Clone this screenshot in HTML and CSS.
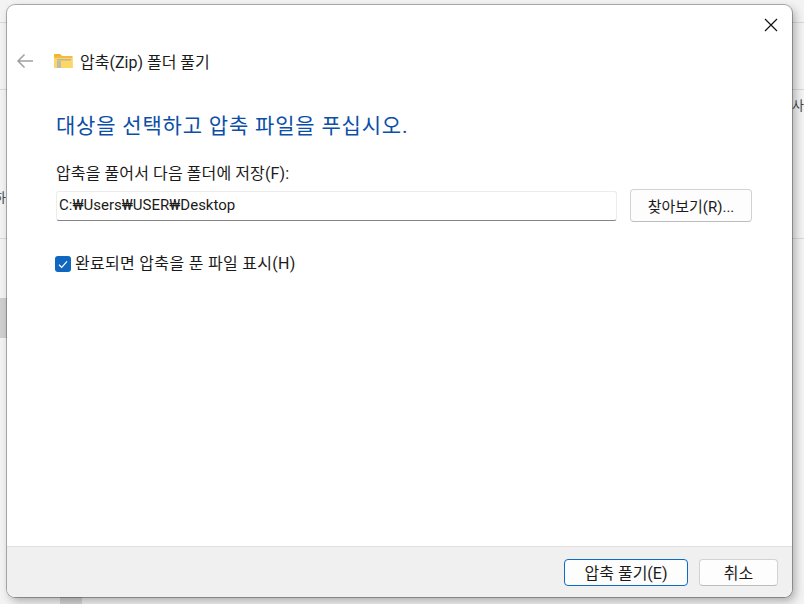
FILE: index.html
```html
<!DOCTYPE html>
<html lang="ko">
<head>
    <meta charset="UTF-8">
    <meta name="viewport" content="width=device-width, initial-scale=1.0">
    <title>압축(Zip) 폴더 풀기</title>
    <link rel="stylesheet" href="styles.css">
</head>
<body>
    <!-- explorer window behind the dialog -->
    <div class="behind-line line-top"></div>
    <div class="behind-line line-mid"></div>
    <div class="behind-line line-low"></div>
    <div class="behind-side"></div>
    <div class="behind-tab"></div>
    <span class="behind-text text-left">하</span>
    <span class="behind-text text-right">사</span>

    <div class="dialog">
        <div class="close-row">
            <svg class="close-icon" width="14" height="14" viewBox="0 0 14 14">
                <path d="M1 1L13 13M13 1L1 13" stroke="#111" stroke-width="1.2" fill="none"/>
            </svg>
        </div>

        <div class="title-row">
            <svg class="back-icon" width="18" height="16" viewBox="0 0 18 16">
                <path d="M17 8H2M8.5 1.5L2 8L8.5 14.5" stroke="#a0a0a0" stroke-width="1.5" fill="none"/>
            </svg>
            <svg class="zip-icon" width="19" height="14" viewBox="0 0 19 14">
                <path d="M0 1A1 1 0 0 1 1 0H6L8 2H0Z" fill="#f0b429"/>
                <rect x="0" y="2" width="18.5" height="12" fill="#f2bb3c"/>
                <rect x="0" y="4" width="18.5" height="10" fill="#fcd768"/>
                <rect x="3" y="5" width="14" height="1.5" fill="#b9b5a4"/>
                <rect x="3" y="7" width="4" height="7" fill="#bdbbb2"/>
            </svg>
            <span class="title-text">압축(Zip) 폴더 풀기</span>
        </div>

        <div class="content">
            <h1 class="heading">대상을 선택하고 압축 파일을 푸십시오.</h1>
            <div class="field-label">압축을 풀어서 다음 폴더에 저장(F):</div>
            <div class="path-row">
                <div class="path-input">C:₩Users₩USER₩Desktop</div>
                <button class="btn browse-btn">찾아보기(R)...</button>
            </div>
            <div class="check-row">
                <span class="checkbox">
                    <svg width="10" height="9" viewBox="0 0 10 9">
                        <path d="M1 4.8L3.7 7.4L9 1.4" stroke="#fff" stroke-width="1.2" fill="none"/>
                    </svg>
                </span>
                <span class="check-text">완료되면 압축을 푼 파일 표시(H)</span>
            </div>
        </div>

        <div class="footer">
            <button class="btn extract-btn">압축 풀기(E)</button>
            <button class="btn cancel-btn">취소</button>
        </div>
    </div>
</body>
</html>
```

FILE: styles.css
```css
html, body {
    margin: 0;
    padding: 0;
}

body {
    position: relative;
    width: 804px;
    height: 604px;
    overflow: hidden;
    background: #f3f3f3;
    font-family: "Roboto", "Noto Sans CJK KR", sans-serif;
    color: #1b1b1b;
}

/* things behind the dialog */
.behind-line {
    position: absolute;
    left: 0;
    width: 804px;
    height: 1px;
    background: #d9d9d9;
}
.line-top { top: 22px; }
.line-mid { top: 89px; }
.line-low { top: 238px; }

.behind-side {
    position: absolute;
    left: 0;
    top: 298px;
    width: 7px;
    height: 40px;
    background: #cfcfcf;
}

.behind-tab {
    position: absolute;
    left: 60px;
    top: 597px;
    width: 22px;
    height: 7px;
    background: #d6d6d6;
}

.behind-text {
    position: absolute;
    font-size: 13px;
    line-height: 16px;
    color: #444;
}
.text-left { left: -6px; top: 190px; }
.text-right { left: 792px; top: 98px; }

.dialog {
    position: absolute;
    left: 7px;
    top: 5px;
    width: 785px;
    height: 592px;
    box-sizing: border-box;
    display: flex;
    flex-direction: column;
    background: #fff;
    border-radius: 8px;
    overflow: hidden;
    box-shadow: 0 0 0 1px rgba(0, 0, 0, 0.28), 3px 4px 10px rgba(0, 0, 0, 0.3);
}

.close-row {
    display: flex;
    justify-content: flex-end;
    height: 39px;
    padding: 13px 14px 0 0;
    box-sizing: border-box;
}

.title-row {
    display: flex;
    align-items: center;
    height: 34px;
    padding-left: 9px;
}

.zip-icon {
    margin-left: 20px;
}

.title-text {
    margin-left: 7px;
    font-size: 16px;
}

.content {
    flex: 1;
    padding: 0 40px 0 49px;
}

.heading {
    margin: 33px 0 0;
    font-size: 21px;
    line-height: 30px;
    font-weight: 400;
    letter-spacing: 0.8px;
    color: #0b4fa8;
}

.field-label {
    margin-top: 23px;
    font-size: 16px;
    line-height: 20px;
    letter-spacing: 0.1px;
}

.path-row {
    display: flex;
    align-items: center;
    gap: 13px;
    margin-top: 5px;
}

.path-input {
    width: 561px;
    height: 30px;
    box-sizing: border-box;
    padding: 0 2px;
    font-size: 15px;
    line-height: 26px;
    border: 1px solid #ececec;
    border-bottom: 1px solid #848484;
    border-radius: 3px;
}

.btn {
    height: 33px;
    padding: 0;
    font-family: inherit;
    font-size: 16px;
    color: #1b1b1b;
    background: #fdfdfd;
    border: 1px solid #d2d2d2;
    border-bottom-color: #bdbdbd;
    border-radius: 4px;
}

.browse-btn {
    width: 122px;
    font-size: 15px;
}

.check-row {
    display: flex;
    align-items: center;
    gap: 4px;
    margin-top: 32px;
    margin-left: -1px;
    font-size: 16px;
    line-height: 20px;
}

.check-text {
    letter-spacing: 0.3px;
}

.checkbox {
    display: flex;
    align-items: center;
    justify-content: center;
    width: 16px;
    height: 16px;
    background: #0f67c0;
    border-radius: 3px;
}

.footer {
    display: flex;
    justify-content: flex-end;
    align-items: center;
    gap: 11px;
    height: 51px;
    box-sizing: border-box;
    padding: 0 14px 0 0;
    background: #f0f0f0;
    border-top: 1px solid #dfdfdf;
}

.footer .btn {
    height: 27px;
}

.extract-btn {
    width: 124px;
    border: 1px solid #0a6cc4;
    border-radius: 4px;
}

.cancel-btn {
    width: 79px;
}
```
